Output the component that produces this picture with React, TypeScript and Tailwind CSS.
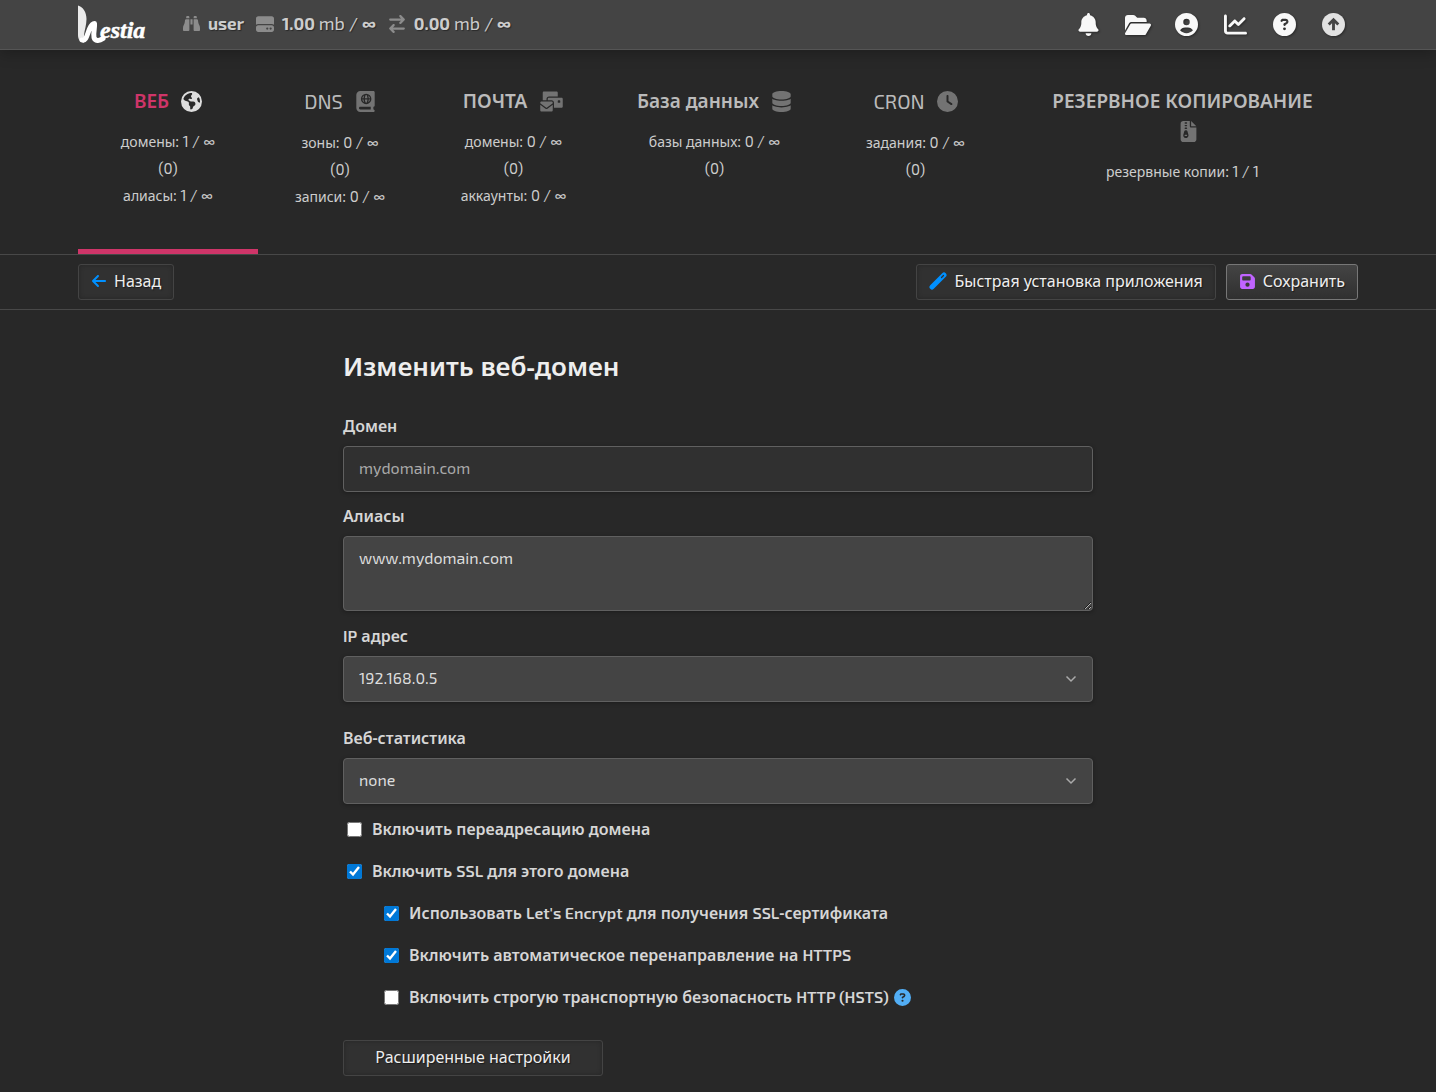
import React, { type ReactNode } from "react";
import {
  FaArrowLeft,
  FaArrowRightArrowLeft,
  FaBell,
  FaBinoculars,
  FaBookAtlas,
  FaChartLine,
  FaCircleQuestion,
  FaCircleUser,
  FaClock,
  FaDatabase,
  FaEarthAmericas,
  FaEnvelopesBulk,
  FaFileZipper,
  FaFloppyDisk,
  FaFolderOpen,
  FaHardDrive,
} from "react-icons/fa6";

type Icon = (props: { size?: number }) => ReactNode;

const container = "mx-auto w-full max-w-[1280px]";

/** Sets Latin letters and digits in the display face and leaves Cyrillic in the body face. */
function Mixed({ text, latin = "" }: { text: string; latin?: string }) {
  const runs = text.split(/([A-Za-z0-9()∞](?:[A-Za-z0-9()'./∞ ]*[A-Za-z0-9()∞])?)/).filter(Boolean);
  return (
    <span>
      {runs.map((run, i) =>
        /^[A-Za-z0-9()∞]/.test(run) ? (
          <span key={i} className={`font-['Exo_2','Noto_Sans',sans-serif] ${latin}`}>{run}</span>
        ) : (
          run
        ),
      )}
    </span>
  );
}

function Logo() {
  return (
    <svg viewBox="0 0 70 40" className="h-10 w-[70px]" role="img" aria-label="Hestia">
      <path d="M0 0.500C5 2 8.500 7 8.500 14C8.500 20 6.500 25 6 30L6 37.500C2 37 0 34.500 0 30Z" fill="#ebebeb" />
      <path
        d="M4 35C8 36.500 9 30 11.500 24C13 20.500 14.500 18.500 16.500 18.500C17 23 15 28 16 32.500C17 36 21 36.500 25 33.500"
        fill="none"
        stroke="#fff"
        strokeWidth="5"
        strokeLinecap="round"
        strokeLinejoin="round"
      />
      <text x="22" y="33" fontSize="24" fontWeight="700" fontStyle="italic" fill="#fff" stroke="#fff" strokeWidth="0.500" fontFamily="Liberation Serif, serif">
        estia
      </text>
    </svg>
  );
}

function Wand() {
  return (
    <svg viewBox="0 0 18 18" className="size-[18px]" fill="none" strokeLinecap="round" aria-hidden="true">
      <path d="M3 15L15 3" stroke="#0090ff" strokeWidth="5" />
      <path d="M12.500 5.500L14.500 3.500" stroke="#303030" strokeWidth="1.200" />
    </svg>
  );
}

function CircleUp({ size = 23 }: { size?: number }) {
  return (
    <svg viewBox="0 0 24 24" width={size} height={size} aria-hidden="true">
      <circle cx="12" cy="12" r="12" fill="currentColor" />
      <path d="M12 18V7M7 12L12 7L17 12" fill="none" stroke="#444" strokeWidth="3" />
    </svg>
  );
}

function Usage() {
  return (
    <div className="mb-0.5 ml-[35px] flex items-center gap-3 font-['Exo_2','Noto_Sans',sans-serif] text-[17px] text-[#cdcdcd] [text-shadow:1px_1px_1px_rgba(0,0,0,.4)]">
      <span className="flex items-center gap-2">
        <FaBinoculars className="size-[17px] text-[#8c8c8c]" />
        <b>user</b>
      </span>
      <span className="flex items-center gap-2">
        <FaHardDrive className="size-[18px] text-[#8c8c8c]" />
        <span><b>1.00</b> <span className="text-lg leading-6">mb /</span> <b>∞</b></span>
      </span>
      <span className="flex items-center gap-2">
        <FaArrowRightArrowLeft className="size-[18px] text-[#8c8c8c]" />
        <span><b>0.00</b> <span className="text-lg leading-6">mb /</span> <b>∞</b></span>
      </span>
    </div>
  );
}

const topLinks: { label: string; Icon: Icon; style: string; size: number }[] = [
  { label: "Уведомления", Icon: FaBell, style: "text-[#f8f8f8]", size: 23 },
  { label: "Файлы", Icon: FaFolderOpen, style: "text-[#f8f8f8]", size: 26 },
  { label: "Профиль", Icon: FaCircleUser, style: "text-[#f8f8f8]", size: 23 },
  { label: "Статистика", Icon: FaChartLine, style: "text-[#f8f8f8]", size: 23 },
  { label: "Помощь", Icon: FaCircleQuestion, style: "text-[#f8f8f8]", size: 23 },
  { label: "Выход", Icon: CircleUp, style: "text-[#e2e2e2]", size: 23 },
];

function TopBar() {
  return (
    <header className="h-[50px] border-b border-[#555] bg-[#444] shadow-[0_2px_16px_rgba(0,0,0,.3)]">
      <div className={`${container} flex h-full items-center`}>
        <a href="#home"><Logo /></a>
        <Usage />
        <nav className="ml-auto flex items-center">
          {topLinks.map(({ label, Icon, style, size }) => (
            <a key={label} href="#top" aria-label={label} className={`flex w-[49px] justify-center drop-shadow-[1px_1px_1px_rgba(0,0,0,.4)] ${style}`}>
              <Icon size={size} />
            </a>
          ))}
        </nav>
      </div>
    </header>
  );
}

const tabs: { title: string; Icon: Icon; lines: string[]; size?: number; active?: boolean; stacked?: boolean; light?: boolean }[] = [
  { title: "ВЕБ", Icon: FaEarthAmericas, lines: ["домены: 1 / ∞", "(0)", "алиасы: 1 / ∞"], active: true },
  { title: "DNS", Icon: FaBookAtlas, lines: ["зоны: 0 / ∞", "(0)", "записи: 0 / ∞"], light: true },
  { title: "ПОЧТА", Icon: FaEnvelopesBulk, lines: ["домены: 0 / ∞", "(0)", "аккаунты: 0 / ∞"], size: 25 },
  { title: "База данных", Icon: FaDatabase, lines: ["базы данных: 0 / ∞", "(0)"] },
  { title: "CRON", Icon: FaClock, lines: ["задания: 0 / ∞", "(0)"], light: true },
  { title: "РЕЗЕРВНОЕ КОПИРОВАНИЕ", Icon: FaFileZipper, lines: ["резервные копии: 1 / 1"], stacked: true },
];

function MainMenu() {
  return (
    <nav className="border-b border-[#484848]">
      <div className={`${container} grid grid-cols-[180fr_164fr_183fr_219fr_183fr_351fr]`}>
        {tabs.map(({ title, Icon, lines, size = 21, active, stacked, light }) => (
          <a
            key={title}
            href="#tab"
            className={`flex h-[204px] flex-col items-center border-b-[5px] pt-9 text-center text-[#cdcdcd] ${active ? "border-[#cf3569]" : "border-transparent"}`}
          >
            <span
              className={`flex items-center leading-[30px] ${stacked ? "flex-col" : "gap-3"} ${active ? "text-[#cf3569]" : "text-[#bbb]"} ${light ? "text-[20px] font-normal" : "text-[19px] font-semibold"}`}
            >
              <Mixed text={title} />
              <span className={`flex h-[30px] items-center ${active ? "text-[#ddd]" : "text-[#737373]"} ${stacked ? "ml-3" : ""}`}>
                <Icon size={size} />
              </span>
            </span>
            <span className="mt-3 flex flex-col text-[14px] leading-[27px]">
              {lines.map((line) => (
                <span key={line} className="h-[27px]">
                  <Mixed text={line} latin="text-[15px]" />
                </span>
              ))}
            </span>
          </a>
        ))}
      </div>
    </nav>
  );
}

function Button({ children, primary, wide }: { children: ReactNode; primary?: boolean; wide?: boolean }) {
  return (
    <button
      type="button"
      className={`flex h-9 items-center justify-center gap-[7px] rounded-[3px] border px-3 pb-0.5 text-base whitespace-nowrap text-[#eee] [text-shadow:1px_1px_1px_rgba(0,0,0,.5)] ${primary ? "border-[#777] bg-linear-to-b from-[#444] to-[#303030]" : "border-[#444] bg-[#313131] shadow-[inset_0_0_5px_rgba(0,0,0,.25)]"} ${wide ? "w-[260px]" : ""}`}
    >
      {children}
    </button>
  );
}

function Toolbar() {
  return (
    <div className="border-b border-[#484848] py-[9px]">
      <div className={`${container} flex justify-between`}>
        <Button>
          <FaArrowLeft className="text-[#0090ff]" />
          Назад
        </Button>
        <div className="flex gap-[10px]">
          <Button>
            <Wand />
            Быстрая установка приложения
          </Button>
          <Button primary>
            <FaFloppyDisk className="size-[17px] text-[#c064ff]" />
            Сохранить
          </Button>
        </div>
      </div>
    </div>
  );
}

function Field({ id, label, children }: { id: string; label: string; children: ReactNode }) {
  return (
    <div>
      <label htmlFor={id} className="mb-2 block text-base leading-6 font-semibold"><Mixed text={label} /></label>
      {children}
    </div>
  );
}

const control =
  "block w-full rounded-[4px] border border-[#606060] px-[15px] font-['Exo_2','Noto_Sans',sans-serif] text-base outline-none shadow-[0_1px_4px_rgba(0,0,0,.3)]";

function Select({ id, value }: { id: string; value: string }) {
  return (
    <div className="grid items-center">
      <select id={id} defaultValue={value} className={`${control} col-start-1 row-start-1 h-[46px] appearance-none bg-[#444] pb-[3px] text-[#ddd]`}>
        <option>{value}</option>
      </select>
      <svg viewBox="0 0 12 8" className="pointer-events-none col-start-1 row-start-1 mr-4 h-2 w-3 justify-self-end" fill="none" stroke="#aaa" strokeWidth="1.500">
        <path d="M1.500 1.500L6 6L10.500 1.500" />
      </svg>
    </div>
  );
}

function Check({ id, label, checked, children }: { id: string; label: string; checked?: boolean; children?: ReactNode }) {
  return (
    <div className="flex h-6 items-center">
      <input id={id} type="checkbox" defaultChecked={checked} className="mr-[10px] size-[15px] shrink-0 accent-[#0078d7]" />
      <label htmlFor={id} className="text-base leading-6 font-semibold">
        <Mixed text={label} />
      </label>
      {children}
    </div>
  );
}

export default function App() {
  return (
    <div className="min-h-screen bg-[#282828] pb-4 font-['Noto_Sans',sans-serif] text-[#d6d6d6]">
      <TopBar />
      <MainMenu />
      <Toolbar />
      <form className="mx-auto mt-9 w-full max-w-[750px]">
        <h1 className="text-[26px] leading-10 font-semibold text-[#eee]">Изменить веб-домен</h1>
        <div className="mt-7">
          <Field id="domain" label="Домен">
            <input id="domain" defaultValue="mydomain.com" readOnly className={`${control} h-[46px] bg-[#303030] pb-[3px] text-[#aaa]`} />
          </Field>
        </div>
        <div className="mt-3">
          <Field id="aliases" label="Алиасы">
            <textarea id="aliases" defaultValue="www.mydomain.com" className={`${control} h-[75px] resize bg-[#444] py-[9px] leading-6 text-[#ddd]`} />
          </Field>
        </div>
        <div className="mt-[13px]">
          <Field id="ip" label="IP адрес">
            <Select id="ip" value="192.168.0.5" />
          </Field>
        </div>
        <div className="mt-6">
          <Field id="stats" label="Веб-статистика">
            <Select id="stats" value="none" />
          </Field>
        </div>
        <div className="mt-[13px] flex flex-col gap-[18px] pl-1">
          <Check id="redirect" label="Включить переадресацию домена" />
          <Check id="ssl" label="Включить SSL для этого домена" checked />
          <div className="flex flex-col gap-[18px] pl-[37px]">
            <Check id="le" label="Использовать Let's Encrypt для получения SSL-сертификата" checked />
            <Check id="https" label="Включить автоматическое перенаправление на HTTPS" checked />
            <Check id="hsts" label="Включить строгую транспортную безопасность HTTP (HSTS)">
              <a href="#hsts" aria-label="Справка" className="ml-[5px] text-[#52aef5]"><FaCircleQuestion size={17} /></a>
            </Check>
          </div>
        </div>
        <div className="mt-[31px]">
          <Button wide>Расширенные настройки</Button>
        </div>
      </form>
    </div>
  );
}
